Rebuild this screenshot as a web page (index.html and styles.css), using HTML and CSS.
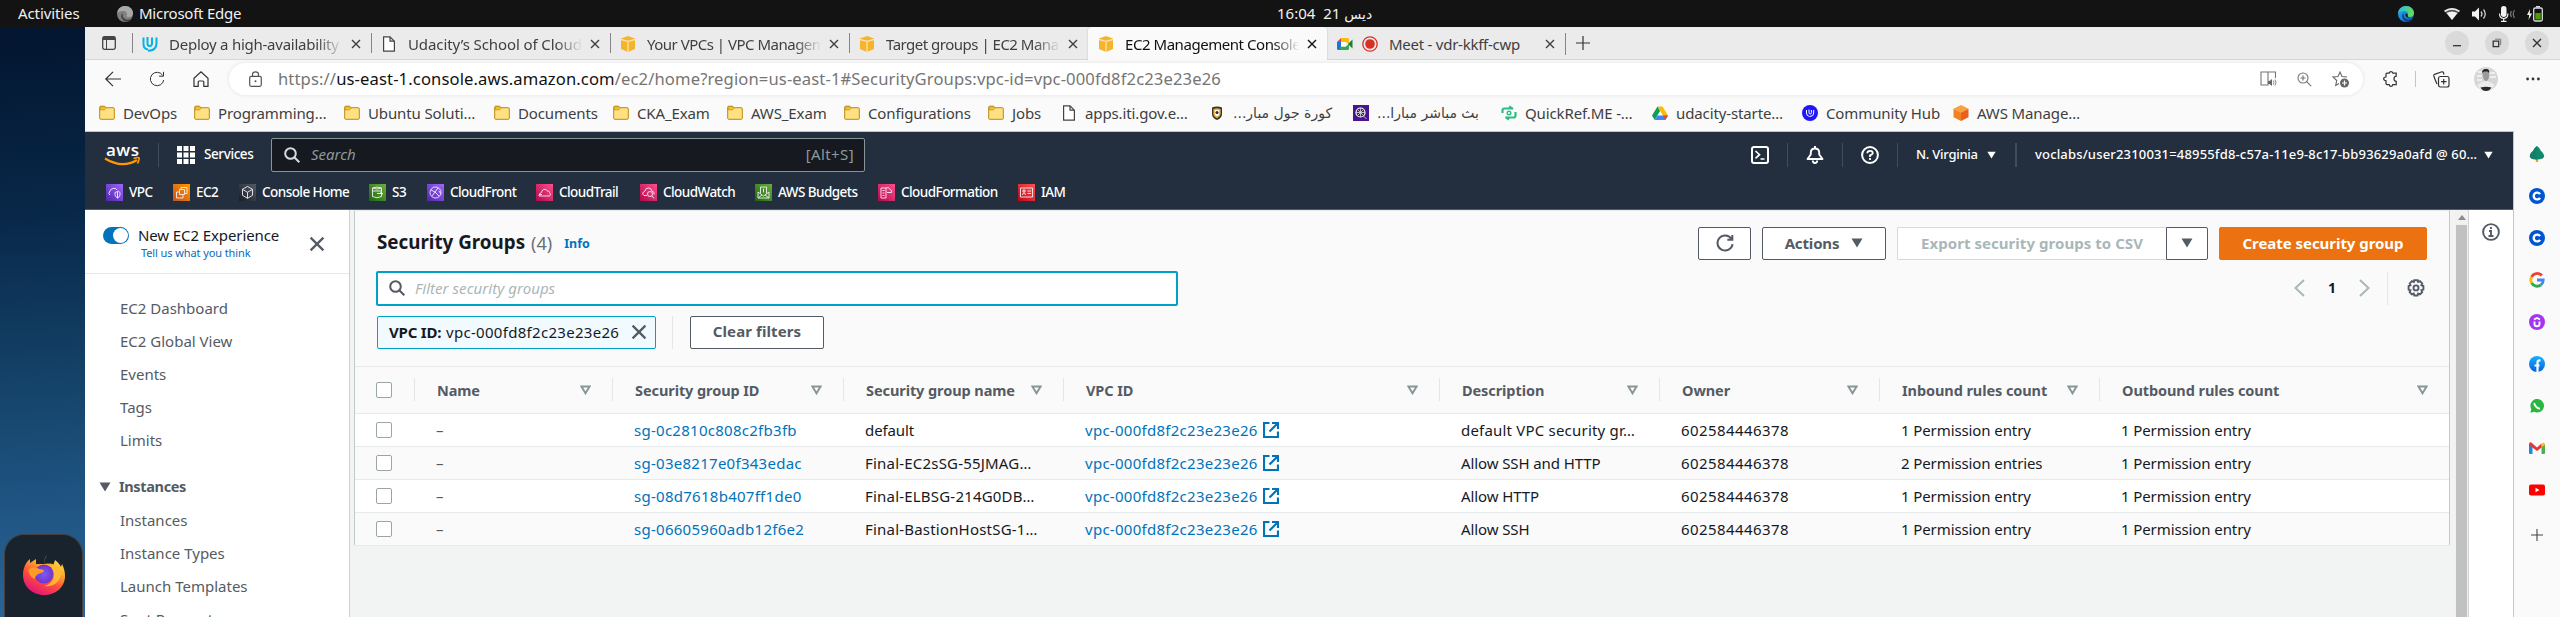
FILE: index.html
```html
<!DOCTYPE html>
<html lang="en">
<head>
<meta charset="utf-8">
<title>EC2 Management Console</title>
<link rel="stylesheet" href="styles.css">
</head>
<body>
<svg class="defs" aria-hidden="true">
  <defs>
    <linearGradient id="edge-a" x1="0" y1="0" x2="1" y2="1"><stop offset="0" stop-color="#2bb5ea"/><stop offset=".5" stop-color="#1b86d8"/><stop offset="1" stop-color="#0b4fa8"/></linearGradient>
    <linearGradient id="edge-b" x1="0" y1="0" x2="1" y2=".4"><stop offset="0" stop-color="#2ab8ee"/><stop offset="1" stop-color="#5fdc5a"/></linearGradient>
    <linearGradient id="ff" x1=".8" y1="0" x2=".3" y2="1"><stop offset="0" stop-color="#fff44f"/><stop offset=".35" stop-color="#ffb02e"/><stop offset=".65" stop-color="#ff4c3c"/><stop offset="1" stop-color="#e0127c"/></linearGradient>
    <radialGradient id="ffc"><stop offset="0" stop-color="#7a5cf5"/><stop offset="1" stop-color="#7532c8"/></radialGradient>
    <linearGradient id="fb" x1="0" y1="0" x2="0" y2="1"><stop offset="0" stop-color="#19afff"/><stop offset="1" stop-color="#0562df"/></linearGradient>
  </defs>
  <symbol id="folder" viewBox="0 0 16 16"><path d="M.7 2.2q0-1 1-1h4l1.4 1.5h7.2q1 0 1 1v9.600q0 1-1 1H1.700q-1 0-1-1z" fill="#ffe082" stroke="#b98a12" stroke-width="1"/><path d="M1.200 4.800V2.200q0-.5.5-.5h3.800L7 3.200 5.500 4.800z" fill="#f9c22e" stroke="#b98a12" stroke-width=".7"/></symbol>
  <symbol id="page" viewBox="0 0 16 16"><path d="M2.600.800h6.400l4.400 4.400v10H2.600zM9 .800v4.400h4.400" fill="#fff" stroke="#444" stroke-width="1.200"/></symbol>
  <symbol id="cube" viewBox="0 0 16 16"><path d="M8 0l7 2.500v10.500L8 16l-7-3V2.500z" fill="#f4b42c"/><path d="M1 3.500l7 1.800 7-1.800M8 5.300V16" stroke="#fce3ac" stroke-width="1.300" fill="none"/></symbol>
  <symbol id="close" viewBox="0 0 10 10"><path d="M1 1l8 8M9 1L1 9" stroke="currentColor" stroke-width="1.400" fill="none"/></symbol>
  <symbol id="plus" viewBox="0 0 14 14"><path d="M7 0v14M0 7h14" stroke="currentColor" stroke-width="1.200"/></symbol>
  <symbol id="search" viewBox="0 0 16 16"><circle cx="6.500" cy="6.500" r="5.300" fill="none" stroke="currentColor" stroke-width="2"/><path d="M10.300 10.300l5 5" stroke="currentColor" stroke-width="2"/></symbol>
  <symbol id="caret" viewBox="0 0 12 10"><path d="M.5.500h11L6 9.500z" fill="currentColor"/></symbol>
  <symbol id="sort" viewBox="0 0 12 10"><path d="M1.500 1.200h9L6 8.600z" fill="none" stroke="currentColor" stroke-width="2.100"/></symbol>
  <symbol id="ext" viewBox="0 0 16 16"><path d="M6.500 1H1v14h14V9.500M9 1h6v6M15 1L6.500 9.500" fill="none" stroke="currentColor" stroke-width="2.200"/></symbol>
  <symbol id="reload" viewBox="0 0 16 16"><path d="M14.700 9A6.700 6.700 0 1 1 13.600 4.200M14.500.800v4.400h-4.400" fill="none" stroke="currentColor"/></symbol>
  <symbol id="edge" viewBox="0 0 16 16"><circle cx="8" cy="8" r="8" fill="url(#edge-a)"/><path d="M.1 7C1 2.500 4.200 0 8 0c4.800 0 8 3.500 8 7 0 2.400-1.800 4-4 4-2 0-3-1-2.300-1.800C10.600 7.500 9.500 5 6.500 5 4 5 1.500 5.500.1 7z" fill="url(#edge-b)"/><path d="M6 7.500c-1.500 3.500 2 7 6.500 5.800 1.200-.3 2 .1 1.200.8C12 16 7.500 16.500 5 13 3.500 10.500 4 8 6 7.500z" fill="#0c3f8f"/><path d="M9.700 9.200c-.7.800.3 1.800 2.300 1.800-2 1.200-5 .2-4.500-3 1-.8 2.500 0 2.200 1.200z" fill="#131313"/></symbol>
  <symbol id="coursera" viewBox="0 0 16 16"><circle cx="8" cy="8" r="8" fill="#0056d2"/><path d="M11 9.800A3.400 3.400 0 1 1 11 6.200" fill="none" stroke="#fff" stroke-width="2.400"/></symbol>
</svg>

<header class="topbar">
  <span class="activities">Activities</span>
  <svg class="app-icon" viewBox="0 0 16 16"><circle cx="8" cy="8" r="8" fill="#808080"/><path d="M.1 7C1 2.500 4.200 0 8 0c4.800 0 8 3.500 8 7 0 2.400-1.800 4-4 4-2 0-3-1-2.300-1.800C10.600 7.500 9.500 5 6.500 5 4 5 1.500 5.500.1 7z" fill="#a8a8a8"/><path d="M6 7.500c-1.500 3.500 2 7 6.500 5.800 1.200-.3 2 .1 1.200.8C12 16 7.500 16.500 5 13 3.500 10.500 4 8 6 7.500z" fill="#444"/></svg>
  <span class="app-name">Microsoft Edge</span>
  <span class="clock">16:04&nbsp; 21 <bdi class="ar">ديس</bdi></span>
  <div class="tray">
    <svg width="16" height="16"><use href="#edge"/></svg>
    <svg width="16" height="12" viewBox="0 0 16 12"><path d="M0 2.700Q8-2.500 16 2.700L8 12z" fill="#555"/><path d="M0 2.700Q8-2.500 16 2.700L14.800 4Q8-.3 1.200 4z" fill="#eee"/><path d="M2.500 5Q8 1.800 13.500 5L8 12z" fill="#f2f2f2"/></svg>
    <svg width="15" height="14" viewBox="0 0 15 14"><path d="M0 4.500h3L7 .500v13L3 9.500H0z" fill="#f2f2f2"/><path d="M9 4.500q2 2.500 0 5M11.500 2.500q3.500 4.500 0 9" stroke="#ccc" stroke-width="1.300" fill="none"/></svg>
    <svg width="16" height="16" viewBox="0 0 16 16"><rect x="2" y="0" width="5.500" height="11" rx="2.700" fill="#f2f2f2"/><path d="M.5 7.500q0 5 4.200 5t4.200-5M4.700 12v3.500M2 15.300h5.500" stroke="#eee" stroke-width="1.200" fill="none"/><path d="M12.500 5q-2 3 0 6M15.500 4q-2.500 4 0 8" stroke="#777" stroke-width="1.200" fill="none"/></svg>
    <svg width="16" height="16" viewBox="0 0 16 16"><path d="M3 3L0 9h2.200L1.500 14 5 7.500H2.800z" fill="#f2f2f2"/><rect x="6.700" y="2" width="8.600" height="13" rx="1.500" fill="none" stroke="#ddd" stroke-width="1.300"/><path d="M9 .7h4" stroke="#ddd" stroke-width="1.400"/><path d="M8.300 7h5.500v6.500H8.300z" fill="#4e9a06"/></svg>
  </div>
</header>

<div class="desktop">
  <aside class="dock">
    <div class="dock-panel">
      <svg class="firefox" viewBox="0 0 42 44"><path d="M27 1C22 5 21 9 21 13c5-1 9 2 9 2L32 9c3 2 5 5 6 7l1-3c2 4 3 8 3 12 0 11-9 19-21 19S0 35 0 24c0-7 3-13 7-16v4l6-4v5c4 0 8 0 8 0 0-4 2-9 6-12z" fill="url(#ff)"/><circle cx="21" cy="23" r="9.500" fill="url(#ffc)"/><path d="M5 19c3-3 8-3 11-1 3 0 5 1 5 2-1 2-5 2-7 4-3 3-2 4-2 4-4-1-6-5-7-9z" fill="#ff9a26"/><path d="M23 13c5-1 9 5 8 12 0 5-5 9-10 10 9 2 17-5 17-13-1-7-8-11-15-9z" fill="#ffbd35" opacity=".9"/></svg>
    </div>
  </aside>

  <main class="window">
    <div class="tabstrip">
      <svg class="workspaces" viewBox="0 0 14 14"><rect x=".7" y=".7" width="12.600" height="12.600" rx="1.800" fill="none" stroke="#444" stroke-width="1.300"/><path d="M1 .700h12v3.300H1z" fill="#444"/><path d="M4.500 4v9" stroke="#444"/></svg>
      <div class="tab"><svg class="fav" viewBox="0 0 16 16"><path d="M1.500 1.500v6.500q0 5 4.500 5.500M5.500 1v6.500q0 2.500 2.200 2.500T10 7.500V1.500M14.500 1.500v6q0 7-8.500 7.300" fill="none" stroke="#02b3e4" stroke-width="2"/></svg><span class="tab-title">Deploy a high-availability</span><svg class="tab-x"><use href="#close"/></svg></div>
      <div class="tab"><svg class="fav"><use href="#page"/></svg><span class="tab-title">Udacity’s School of Cloud</span><svg class="tab-x"><use href="#close"/></svg></div>
      <div class="tab"><svg class="fav"><use href="#cube"/></svg><span class="tab-title">Your VPCs | VPC Managem</span><svg class="tab-x"><use href="#close"/></svg></div>
      <div class="tab"><svg class="fav"><use href="#cube"/></svg><span class="tab-title">Target groups | EC2 Mana</span><svg class="tab-x"><use href="#close"/></svg></div>
      <div class="tab active"><svg class="fav"><use href="#cube"/></svg><span class="tab-title">EC2 Management Console</span><svg class="tab-x"><use href="#close"/></svg></div>
      <div class="tab meet"><svg class="fav" viewBox="0 0 16 16"><path d="M0 6l4-4v4z" fill="#ea4335"/><path d="M0 6h4v8H1.500Q0 14 0 12.500z" fill="#1a73e8"/><path d="M4 2h6.500Q12 2 12 3.500V8l-3-2H4z" fill="#fbbc04"/><path d="M3 10.500h6L12 8v4.500q0 1.500-1.500 1.500H3z" fill="#34a853"/><path d="M4 6h5v4.500H4z" fill="#fff"/><path d="M11 8l4.500-4.500v9z" fill="#188038"/></svg><svg class="rec" viewBox="0 0 16 16"><circle cx="8" cy="8" r="7.200" fill="none" stroke="#d93025" stroke-width="1.300"/><circle cx="8" cy="8" r="4.800" fill="#d93025"/></svg><span class="tab-title">Meet - vdr-kkff-cwp</span><svg class="tab-x"><use href="#close"/></svg></div>
      <svg class="newtab"><use href="#plus"/></svg>
      <div class="winctl">
        <i><svg viewBox="0 0 12 12"><path d="M2 8.700h8" stroke="#333" stroke-width="1.300"/></svg></i>
        <i><svg viewBox="0 0 12 12"><path d="M2.200 4.200h5.500v5.500H2.200z" fill="none" stroke="#333" stroke-width="1.300"/><path d="M4 2.200h5.700V8" fill="none" stroke="#777"/></svg></i>
        <i><svg viewBox="0 0 12 12"><path d="M2 2l8 8M10 2l-8 8" stroke="#333" stroke-width="1.400"/></svg></i>
      </div>
    </div>

    <div class="toolbar">
      <svg class="nav-ic" viewBox="0 0 16 16"><path d="M16 8H.8M8 .8L.8 8 8 15.200" fill="none" stroke="#333" stroke-width="1.200"/></svg>
      <svg class="nav-ic"><use href="#reload"/></svg>
      <svg class="nav-ic" viewBox="0 0 16 16"><path d="M1 7.200l7-6.400 7 6.400v8.200h-4.200V11q0-1-1-1H6.200q-1 0-1 1v4.400H1z" fill="none" stroke="#333" stroke-width="1.200"/></svg>
      <div class="omnibox">
        <svg class="lock" viewBox="0 0 13 16"><rect x=".7" y="5.300" width="11.600" height="10" rx="1.500" fill="none" stroke="#555" stroke-width="1.200"/><path d="M3.500 5.300V3.500q0-2.700 3-2.700t3 2.700v1.800" fill="none" stroke="#555" stroke-width="1.200"/><circle cx="6.500" cy="10.300" r="1" fill="#555"/></svg>
        <span class="url">https://<b>us-east-1.console.aws.amazon.com</b>/ec2/home?region=us-east-1#SecurityGroups:vpc-id=vpc-000fd8f2c23e23e26</span>
        <svg class="ob1" width="17" height="16" viewBox="0 0 17 16"><path d="M8 14H1V1h7zM8 1h7.500v6" fill="none" stroke="#777" stroke-width="1.100"/><path d="M8 10h1.500L12 8v7l-2.500-2H8z" fill="#666"/><path d="M13.300 9.500q1.200 2 0 4M15 8.500q2 3 0 6" fill="none" stroke="#888"/></svg>
        <svg class="ob2" width="15" height="15" viewBox="0 0 15 15"><circle cx="6" cy="6" r="5" fill="none" stroke="#777" stroke-width="1.100"/><path d="M9.700 9.700l4.500 4.500M6 3.500v5M3.500 6h5" stroke="#777" stroke-width="1.200"/></svg>
        <svg class="ob3" width="18" height="17" viewBox="0 0 18 17"><path d="M15 6L10 5.500 8 1 6 5.500l-5 .5 3.700 3.500-1 5L7 12.500" fill="none" stroke="#666" stroke-width="1.100"/><circle cx="12.500" cy="12" r="4.500" fill="#666"/><path d="M12.500 9.500v5M10 12h5" stroke="#fff" stroke-width="1.200"/></svg>
      </div>
      <svg class="puzzle" viewBox="0 0 16 16"><path d="M4 2.200h2.200q.3-1.600 1.800-1.600t1.800 1.600h3.400v3q-2.200.2-2.200 2.600t2.200 2.600v3.200H9.800q-.3 1.700-1.800 1.700t-1.800-1.700H4q-1 0-1-1V9.800q-2.300-.2-2.300-2T3 6V3.200q0-1 1-1z" fill="none" stroke="#333" stroke-width="1.200"/></svg>
      <span class="tsep"></span>
      <svg class="collect" viewBox="0 0 17 17"><rect x="5.500" y="5.500" width="10.500" height="10.500" rx="2" fill="none" stroke="#333" stroke-width="1.200"/><path d="M10.700 8v5.500M8 10.700h5.500" stroke="#333" stroke-width="1.200"/><path d="M4 13Q2.500 10 .8 5q-.3-1.200.8-1.600L8.800.8q1.300-.3 1.700 1L11 3.500" fill="none" stroke="#333" stroke-width="1.200"/></svg>
      <svg class="avatar" viewBox="0 0 24 24"><circle cx="12" cy="12" r="12" fill="#d6d6d6"/><path d="M4 5h4M3 9h5M3 13h5M16 6h5M16 10h6" stroke="#efefef" stroke-width="2"/><path d="M8.500 6q0-4 3.500-4t3 4v4q-1 4-3 4t-3-4z" fill="#9b9b9b"/><path d="M8 6Q8 2 12 2t3 4L14 4.500h-4z" fill="#222"/><path d="M3.500 18q4-4 8-4t9 4q-3 6-9 6t-8-6z" fill="#ececec"/><path d="M6.500 20.500q5.500-1.500 11 0-2 3.500-5.500 3.500t-5.500-3.500z" fill="#2b2b2b"/></svg>
      <svg class="dots" viewBox="0 0 14 4"><circle cx="1.600" cy="2" r="1.400"/><circle cx="7" cy="2" r="1.400"/><circle cx="12.400" cy="2" r="1.400"/></svg>
    </div>

    <nav class="bookmarks">
      <a><svg><use href="#folder"/></svg>DevOps</a>
      <a><svg><use href="#folder"/></svg>Programming…</a>
      <a><svg><use href="#folder"/></svg>Ubuntu Soluti…</a>
      <a><svg><use href="#folder"/></svg>Documents</a>
      <a><svg><use href="#folder"/></svg>CKA_Exam</a>
      <a><svg><use href="#folder"/></svg>AWS_Exam</a>
      <a><svg><use href="#folder"/></svg>Configurations</a>
      <a><svg><use href="#folder"/></svg>Jobs</a>
      <a><svg><use href="#page"/></svg>apps.iti.gov.e…</a>
      <a><svg viewBox="0 0 16 16"><path d="M3 2.500Q8 .500 13 2.500V9q0 4-5 6-5-2-5-6z" fill="#333"/><path d="M5 4.500q3-1 6 0V9q0 2-3 3.500Q5 11 5 9z" fill="#fff" stroke="#e5a823" stroke-width="1.400"/><circle cx="8" cy="7.500" r="1.600" fill="#333"/></svg><bdi class="ar">كورة جول مبار...</bdi></a>
      <a><svg viewBox="0 0 16 16"><rect width="16" height="16" fill="#4a148c"/><circle cx="7.500" cy="7.500" r="4.500" fill="none" stroke="#fff" stroke-width="1.200"/><path d="M7.500 3v9M3 7.500h9M4.500 4.500l6 6M10.500 4.500l-6 6M10.500 11l3 3" stroke="#ddd" stroke-width=".8"/></svg><bdi class="ar">بث مباشر مبارا...</bdi></a>
      <a><svg viewBox="0 0 16 16"><path d="M1.500 8V5.500q0-2 2-2H11M8 1.500l4 2.500M14.500 7v3.500q0 2-2 2H5M8 14.500L4.500 12" fill="none" stroke="#2ebd85" stroke-width="2.200"/><circle cx="8" cy="8" r="1.800" fill="none" stroke="#2ebd85" stroke-width="1.400"/></svg>QuickRef.ME -…</a>
      <a><svg viewBox="0 0 16 16"><path d="M5.500 1.500h5L16 10.500h-5z" fill="#fbbc04"/><path d="M5.500 1.500L8 6 2.700 15 0 10.500z" fill="#0f9d58"/><path d="M5.300 10.500H16L13.300 15H2.700z" fill="#4285f4"/><path d="M16 10.500h-5l2.300 4.500z" fill="#ea4335"/></svg>udacity-starte…</a>
      <a><svg viewBox="0 0 16 16"><circle cx="8" cy="8" r="8" fill="#2015ff"/><path d="M4.500 5v3q0 3 3 3.500M7 4.500v3.200q0 1.300 1.200 1.300t1.200-1.300V5M11.700 5v3q0 3.500-4 3.500" fill="none" stroke="#fff"/></svg>Community Hub</a>
      <a><svg viewBox="0 0 16 16"><path d="M8 0l7.500 3.700L8 7.500.500 3.700z" fill="#f9a03f"/><path d="M.5 3.700L8 7.500V16L.5 12.200z" fill="#f58220"/><path d="M15.500 3.700L8 7.500V16l7.500-3.800z" fill="#e8611c"/></svg>AWS Manage…</a>
    </nav>

    <div class="content">
      <section class="console">
        <header class="aws-head">
          <div class="aws-top">
            <svg class="aws-logo" viewBox="0 0 36 22"><text x="1" y="12" textLength="33" class="aws-word">aws</text><path d="M0 14.500q17 10.500 32 1.500" fill="none" stroke="#f90" stroke-width="2.200"/><path d="M28.500 14.500q5-1.500 5.500-.5t-1.500 5.500" fill="none" stroke="#f90" stroke-width="1.800"/></svg>
            <span class="hsep h1"></span>
            <svg class="grid-ic" viewBox="0 0 18 18"><path d="M0 0h5v5H0zM6.500 0h5v5h-5zM13 0h5v5h-5zM0 6.500h5v5H0zM6.500 6.500h5v5h-5zM13 6.500h5v5h-5zM0 13h5v5H0zM6.500 13h5v5h-5zM13 13h5v5h-5z" fill="#fff"/></svg>
            <span class="services">Services</span>
            <div class="aws-search"><svg><use href="#search"/></svg><em>Search</em><span>[Alt+S]</span></div>
            <div class="aws-right">
              <svg viewBox="0 0 18 18"><rect x="1" y="1" width="16" height="16" rx="2" fill="none" stroke="#fff" stroke-width="2"/><path d="M4.500 5l4 3.700-4 3.700M9.500 13h4" fill="none" stroke="#fff" stroke-width="1.700"/></svg>
              <span class="hsep"></span>
              <svg viewBox="0 0 18 18"><path d="M9 0v2M1.500 13h15L13.200 8.500V6.500Q13 2.500 9 2.500T4.800 6.500v2zM6.800 14.500q0 2.500 2.200 2.500t2.200-2.500" fill="none" stroke="#fff" stroke-width="1.900" stroke-linejoin="round"/></svg>
              <span class="hsep"></span>
              <svg viewBox="0 0 18 18"><circle cx="9" cy="9" r="7.900" fill="none" stroke="#fff" stroke-width="2"/><path d="M6.300 7.300q0-2.500 2.700-2.500t2.700 2.300Q11.700 8.500 9 9.300V11M9 12v2" fill="none" stroke="#fff" stroke-width="1.800"/></svg>
              <span class="hsep"></span>
              <span class="region">N. Virginia</span><svg class="c9"><use href="#caret"/></svg>
              <span class="hsep h2"></span>
              <span class="account">voclabs/user2310031=48955fd8-c57a-11e9-8c17-bb93629a0afd @ 60…</span><svg class="c9"><use href="#caret"/></svg>
            </div>
          </div>
          <nav class="aws-favs">
            <a><svg class="purple" viewBox="0 0 17 17"><path d="M4 11q-2-1-.5-3 .5-3 3.500-3.500Q10 3.500 11 6M9 8.500l3.500-1.300L14 8.500v2q0 2.500-2.500 3.500Q9 12.500 9 10.500zM11.500 8v6"/></svg><span>VPC</span></a>
            <a><svg class="orange" viewBox="0 0 17 17"><path d="M6.500 5.500h5v5h-5zM8 3.500h6v6M3.500 8v6H10v-3.500M3.500 8h3M14 9.500h-2.500M8 3.500v2"/></svg><span>EC2</span></a>
            <a><svg class="gray" viewBox="0 0 17 17"><path d="M8.500 2.500l5 2.800v6l-5 3-5-3v-6zM3.500 5.300l5 3 5-3M8.500 8.300v6"/></svg><span>Console Home</span></a>
            <a><svg class="green" viewBox="0 0 17 17"><path d="M3.500 4v8.500q4.500 2.500 9 0V4M3.500 4q4.500-1.800 9 0-4.500 2-9 0zM3.500 7h9M8 9.500h6M11 8.500l3 1.500"/></svg><span>S3</span></a>
            <a><svg class="purple" viewBox="0 0 17 17"><circle cx="8.500" cy="8.500" r="5.500"/><path d="M4 6l4 2 3-4M8 8l-3 4M8 8l4 4M12 7l2 3"/></svg><span>CloudFront</span></a>
            <a><svg class="pink" viewBox="0 0 17 17"><path d="M3 12h10.500q2-1.500 0-3.500-.5-2-2-1.500Q10 4.500 7.500 5.500 5.500 6.500 5.500 8.500 3 9 3 12zM3 10.500h3"/></svg><span>CloudTrail</span></a>
            <a><svg class="pink" viewBox="0 0 17 17"><path d="M7 11.500H4q-3-2.500 1-4.500.5-3.500 4-3 2.500.5 3 3Q15 8 14 10.500"/><circle cx="10" cy="10" r="2.500"/><path d="M12 12l2 2.500"/></svg><span>CloudWatch</span></a>
            <a><svg class="green" viewBox="0 0 17 17"><path d="M3 8v6h11V8l-5.500 4zM5.500 9.500V3h6v6.500M8.500 4.500v4M3 14l4-3M14 14l-4-3"/></svg><span>AWS Budgets</span></a>
            <a><svg class="pink" viewBox="0 0 17 17"><path d="M3 4h5v10H3zM4.500 6.500h2M4.500 9h2M4.500 11.500h2M8 4q3-1.500 4 1.500 2.500.5 1.500 3H9"/></svg><span>CloudFormation</span></a>
            <a><svg class="red" viewBox="0 0 17 17"><path d="M2.500 4h12v9h-12zM4.500 11q0-2 1.500-2t1.500 2M5 6h2v2H5zM9.500 7H13M9.500 9.500H13"/></svg><span>IAM</span></a>
          </nav>
        </header>

        <div class="aws-body">
          <aside class="sidenav">
            <div class="exp">
              <span class="toggle"><i></i></span>
              <div class="exp-text"><span>New EC2 Experience</span><a>Tell us what you think</a></div>
              <svg class="exp-x"><use href="#close"/></svg>
            </div>
            <ul>
              <li>EC2 Dashboard</li><li>EC2 Global View</li><li>Events</li><li>Tags</li><li>Limits</li>
              <li class="group"><svg><use href="#caret"/></svg>Instances</li>
              <li>Instances</li><li>Instance Types</li><li>Launch Templates</li><li>Spot Requests</li>
            </ul>
          </aside>

          <div class="stage">
            <div class="panel">
              <div class="title-row">
                <h1>Security Groups</h1><span class="count">(4)</span><a class="info">Info</a>
                <div class="actions">
                  <button class="btn refresh"><svg><use href="#reload"/></svg></button>
                  <button class="btn act">Actions<svg><use href="#caret"/></svg></button>
                  <div class="split"><button class="btn export">Export security groups to CSV</button><button class="btn more"><svg><use href="#caret"/></svg></button></div>
                  <button class="btn primary">Create security group</button>
                </div>
              </div>
              <div class="filter-row">
                <div class="filter"><svg><use href="#search"/></svg><em>Filter security groups</em></div>
                <div class="pager">
                  <svg class="chev" viewBox="0 0 11 18"><path d="M10 1L1.500 9l8.500 8" /></svg>
                  <b>1</b>
                  <svg class="chev" viewBox="0 0 11 18"><path d="M1 1l8.500 8L1 17"/></svg>
                  <span class="vsep"></span>
                  <svg class="gear" viewBox="0 0 18 18"><path d="M7.300 1.200h3.400l.5 1.800 1.800-.9 2.200 2.300-.8 1.800 2 .8v3.600l-2 .6.8 2-2.300 2.200-1.800-.8-.6 1.900H7.300l-.6-1.900-1.900.8-2.200-2.300.9-1.800-1.900-.7V7l1.900-.7-.8-1.900 2.200-2.300 1.900.9z"/><circle cx="9" cy="8.900" r="2.500"/></svg>
                </div>
              </div>
              <div class="token-row">
                <div class="token"><b>VPC ID:</b><span>vpc-000fd8f2c23e23e26</span><svg><use href="#close"/></svg></div>
                <span class="vsep"></span>
                <button class="btn clear">Clear filters</button>
              </div>

              <div class="row head">
                <div><i class="cb"></i></div>
                <div>Name<svg><use href="#sort"/></svg></div>
                <div>Security group ID<svg><use href="#sort"/></svg></div>
                <div>Security group name<svg><use href="#sort"/></svg></div>
                <div>VPC ID<svg><use href="#sort"/></svg></div>
                <div>Description<svg><use href="#sort"/></svg></div>
                <div>Owner<svg><use href="#sort"/></svg></div>
                <div>Inbound rules count<svg><use href="#sort"/></svg></div>
                <div>Outbound rules count<svg><use href="#sort"/></svg></div>
              </div>
              <div class="row"><div><i class="cb"></i></div><div class="dash">–</div><div class="id">sg-0c2810c808c2fb3fb</div><div>default</div><div class="id">vpc-000fd8f2c23e23e26<svg><use href="#ext"/></svg></div><div class="trunc">default VPC security gr…</div><div class="num">602584446378</div><div>1 Permission entry</div><div>1 Permission entry</div></div>
              <div class="row"><div><i class="cb"></i></div><div class="dash">–</div><div class="id">sg-03e8217e0f343edac</div><div class="trunc">Final-EC2sSG-55JMAG…</div><div class="id">vpc-000fd8f2c23e23e26<svg><use href="#ext"/></svg></div><div>Allow SSH and HTTP</div><div class="num">602584446378</div><div>2 Permission entries</div><div>1 Permission entry</div></div>
              <div class="row"><div><i class="cb"></i></div><div class="dash">–</div><div class="id">sg-08d7618b407ff1de0</div><div class="trunc">Final-ELBSG-214G0DB…</div><div class="id">vpc-000fd8f2c23e23e26<svg><use href="#ext"/></svg></div><div>Allow HTTP</div><div class="num">602584446378</div><div>1 Permission entry</div><div>1 Permission entry</div></div>
              <div class="row"><div><i class="cb"></i></div><div class="dash">–</div><div class="id">sg-06605960adb12f6e2</div><div class="trunc">Final-BastionHostSG-1…</div><div class="id">vpc-000fd8f2c23e23e26<svg><use href="#ext"/></svg></div><div>Allow SSH</div><div class="num">602584446378</div><div>1 Permission entry</div><div>1 Permission entry</div></div>
            </div>
            <div class="scrollbar"><svg viewBox="0 0 8 5"><path d="M0 5h8L4 0z" fill="#8b8b8b"/></svg><i></i></div>
          </div>

          <aside class="help">
            <svg viewBox="0 0 18 18"><circle cx="9" cy="9" r="7.900" fill="none" stroke="#545b64" stroke-width="1.900"/><path d="M9 4v2M7 8h2v5M6.500 13h5" fill="none" stroke="#545b64" stroke-width="1.900"/></svg>
          </aside>
        </div>
      </section>

      <aside class="edgebar">
        <svg viewBox="0 0 16 16"><path d="M6.800 11h2.400v5H6.800z" fill="#f0a020"/><path d="M8 0q3 2 4 5 4 3 3 6-1 2.500-7 2.500T1 11Q0 8 4 5q1-3 4-5z" fill="#0e8a6c"/><path d="M8 0Q6.500 7 8 13.500 2 13.500 1 11 0 8 4 5q1-3 4-5z" fill="#15806a"/></svg>
        <svg><use href="#coursera"/></svg>
        <svg><use href="#coursera"/></svg>
        <svg viewBox="0 0 16 16"><path d="M12.800 3.500A6.200 6.200 0 0 0 2.600 5" fill="none" stroke="#ea4335" stroke-width="2.800"/><path d="M2.600 5a6.200 6.200 0 0 0 0 6" fill="none" stroke="#fbbc04" stroke-width="2.800"/><path d="M2.600 11a6.200 6.200 0 0 0 9.400 1.800" fill="none" stroke="#34a853" stroke-width="2.800"/><path d="M12 12.800A6 6 0 0 0 14.200 8H8" fill="none" stroke="#4285f4" stroke-width="2.800"/></svg>
        <svg viewBox="0 0 16 16"><circle cx="8" cy="8" r="8" fill="#a435f0"/><path d="M5 5.500L8 4l3 1.500M5.500 7.500V10q0 2.300 2.500 2.300t2.500-2.300V7.500" fill="none" stroke="#fff" stroke-width="1.900"/></svg>
        <svg viewBox="0 0 16 16"><circle cx="8" cy="8" r="8" fill="url(#fb)"/><path d="M8.500 16v-6M5.500 9.500h5M8.500 12V6.500q0-2.500 3-2" fill="none" stroke="#fff" stroke-width="2.200"/></svg>
        <svg viewBox="0 0 16 16"><path d="M1.300 14.700l1-3.500A6.800 6.800 0 1 1 5 13.800z" fill="#29b640"/><path d="M5.500 5q-.5 1.500 1.500 3.700T11 10.500" fill="none" stroke="#fff" stroke-width="2"/></svg>
        <svg viewBox="0 0 16 16"><path d="M0 4v9q0 1 1 1h2.500V6.500z" fill="#1e88e5"/><path d="M16 4v9q0 1-1 1h-2.500V6.500z" fill="#4caf50"/><path d="M12.500 4L14 2.500q2 0 2 2l-3.500 3z" fill="#fbc02d"/><path d="M0 4.500Q0 2 2 2.300L8 7.500l4.500-4v4L8 11 0 5z" fill="#e53935"/></svg>
        <svg viewBox="0 0 16 16"><rect y="2.500" width="16" height="11" rx="2" fill="#f00"/><path d="M6.500 5.700v4.600l4-2.300z" fill="#fff"/></svg>
        <svg class="add" viewBox="0 0 14 14"><path d="M7 1v12M1 7h12" stroke="#444" stroke-width="1.100"/></svg>
      </aside>
    </div>
  </main>
</div>
</body>
</html>
```
FILE: styles.css
```css
* { box-sizing: border-box; }
body { margin: 0; width: 2560px; height: 617px; overflow: hidden; font: 15px/1 "Noto Sans", "DejaVu Sans", sans-serif; color: #16191f; background: #fff; display: flex; flex-direction: column; white-space: nowrap; }
svg { display: block; flex: none; width: 16px; height: 16px; overflow: visible; }
.defs { position: absolute; width: 0; height: 0; }
button { font: inherit; margin: 0; padding: 0; }
i { font-style: normal; }
.ar { font-family: "DejaVu Sans", sans-serif; font-size: 14px; letter-spacing: 0; }

/* GNOME top bar */
.topbar { height: 27px; flex: none; background: #131313; color: #f0f0f0; display: grid; grid-template-columns: 99px 22px 1138px 1121px auto; padding-left: 18px; align-items: center; letter-spacing: -.1px; }
.app-name { letter-spacing: -.25px; }
.tray { display: grid; grid-template-columns: 46px 28px 27px 28px 16px; align-items: center; }
.tray svg:nth-child(2) { height: 12px; }
.tray svg:nth-child(3) { width: 15px; height: 14px; }

.desktop { flex: 1; display: flex; min-height: 0; }
.dock { width: 85px; flex: none; padding: 507px 2px 0 4px; background: linear-gradient(176deg, #03152f 0%, #082849 32%, #174870 66%, #2b659b 100%); }
.dock-panel { height: 100px; border: 1px solid #47413f; border-bottom: 0; border-radius: 20px 20px 0 0; background: #18232d; padding: 16px 0 0 18px; }
.firefox { width: 42px; height: 44px; }
.window { flex: 1; display: flex; flex-direction: column; min-width: 0; background: #fafafa; }

/* Browser tabs */
.tabstrip { height: 33px; flex: none; background: #ebebeb; border-bottom: 1px solid #d6d6d6; display: flex; align-items: stretch; padding-left: 17px; }
.tabstrip > .workspaces { width: 14px; height: 14px; margin: 9px 16px 0 0; }
.tab { width: 239px; height: 33px; display: flex; align-items: center; padding: 0 10px; color: #3f3f3f; background: linear-gradient(#858585, #858585) 0 6px / 1px 20px no-repeat; letter-spacing: -.25px; }
.tab:nth-child(n+3) { letter-spacing: -.4px; }
.tab:nth-child(3) { letter-spacing: -.1px; }
.tab:nth-child(n+4) { letter-spacing: -.5px; }
.tab.active { background: #fafafa; border-radius: 4px 4px 0 0; color: #111; box-shadow: 0 0 2px #bbb; clip-path: inset(0 -2px 0 -2px); letter-spacing: -.45px; }
.tab.meet { background: none; border-right: 1px solid #858585; border-image: linear-gradient(transparent 20%, #858585 20%, #858585 82%, transparent 82%) 1; letter-spacing: -.25px; }
.tab-title { width: 177px; margin-left: 11px; line-height: 24px; overflow: hidden; -webkit-mask-image: linear-gradient(90deg, #000 84%, transparent 99%); mask-image: linear-gradient(90deg, #000 84%, transparent 99%); }
.meet .rec { margin-left: 9px; }
.meet .tab-title { width: 148px; margin-left: 11px; -webkit-mask-image: none; mask-image: none; }
.tab-x { width: 10px; height: 10px; margin-left: 6px; }
.meet .tab-x { margin-left: 9px; }
.newtab { width: 14px; height: 14px; margin: 9px 0 0 10px; color: #333; }
.winctl { margin: 4px 11px 0 auto; display: flex; gap: 16px; }
.winctl i { width: 24px; height: 24px; border-radius: 50%; background: #dadada; display: grid; place-items: center; }
.winctl svg { width: 12px; height: 12px; }

/* Address bar */
.toolbar { height: 38px; flex: none; display: flex; align-items: center; padding-left: 20px; color: #333; }
.nav-ic { margin-right: 28px; }
.omnibox { width: 2134px; height: 32px; margin-left: -8px; border-radius: 16px; background: #fff; box-shadow: 0 0 4px #0000001a; display: flex; align-items: center; padding-left: 20px; }
.lock { width: 13px; }
.url { width: 1982px; margin-left: 16px; font-size: 16.600px; line-height: 24px; color: #757575; letter-spacing: .12px; }
.url b { font-weight: 400; color: #111; }
.ob1 { width: 17px; }
.ob2 { width: 15px; height: 15px; margin-left: 20px; }
.ob3 { width: 18px; height: 17px; margin-left: 20px; }
.puzzle { margin-left: 20px; }
.tsep { width: 1px; height: 16px; background: #c4c4c4; margin: 0 17px 0 16px; }
.collect { width: 17px; height: 17px; }
.avatar { width: 24px; height: 24px; margin-left: 24px; }
.dots { width: 14px; height: 4px; margin-left: 28px; fill: #333; }

.bookmarks { height: 33px; flex: none; display: grid; grid-template-columns: 95px 150px 150px 119px 114px 117px 144px 73px 148px 144px 148px 151px 150px 151px 140px; padding: 0 0 3px 14px; color: #3f3f3f; align-items: center; letter-spacing: -.12px; }
.bookmarks a { display: flex; align-items: center; gap: 8px; line-height: 24px; }

.content { flex: 1; display: flex; min-height: 0; }
.console { width: 2429px; border-right: 1px solid #c3c8c8; border-top: 1px solid #bcc8c8; display: flex; flex-direction: column; }
.edgebar { flex: 1; display: grid; grid-auto-rows: 42px; justify-items: center; align-items: center; padding-top: 2px; justify-content: center; }
.edgebar .add { width: 14px; height: 14px; margin-top: 6px; }

/* AWS header */
.aws-head { height: 78px; flex: none; background: #232f3e; color: #fff; border-bottom: 1px solid #545b64; }
.aws-top { height: 45px; display: flex; align-items: center; padding-left: 20px; }
.aws-logo { width: 36px; height: 22px; }
.aws-word { font: 600 17px "Open Sans", sans-serif; fill: #fff; }
.hsep { width: 1px; height: 24px; background: #414d5c; }
.h1 { margin: 0 18px 0 17px; }
.grid-ic { width: 18px; height: 18px; }
.services { width: 67px; margin-left: 9px; padding-bottom: 2px; font-size: 13.500px; font-weight: 500; letter-spacing: -.4px; line-height: 20px; }
.aws-search { width: 594px; height: 34px; background: #16191f; border: 1px solid #879596; border-radius: 2px; display: flex; align-items: center; padding: 0 10px 0 12px; color: #8d9a9b; line-height: 20px; }
.aws-search svg { color: #d5dbdb; }
.aws-search em { margin-left: 11px; padding-bottom: 2px; }
.aws-search span { margin-left: auto; padding-bottom: 2px; letter-spacing: .4px; }
.aws-right { display: flex; align-items: center; margin-left: 886px; font-size: 13px; font-weight: 500; line-height: 20px; }
.aws-right > svg { width: 18px; height: 18px; margin-right: 18px; }
.aws-right > .hsep { margin-right: 18px; }
.aws-right .region { width: 71px; padding-bottom: 1px; letter-spacing: -.25px; }
.aws-right > .c9 { width: 9px; height: 8px; margin-right: 19px; }
.aws-right > .h2 { width: 2px; }
.aws-right .account { width: 449px; padding-bottom: 1px; letter-spacing: .17px; }
.aws-favs { height: 32px; display: grid; grid-template-columns: 67px 66px 130px 58px 109px 104px 115px 123px 140px 60px; padding: 0 0 1px 21px; align-items: center; font-size: 13.500px; font-weight: 500; letter-spacing: -.55px; }
.aws-favs a { display: flex; align-items: center; gap: 6px; line-height: 18px; }
.aws-favs span { padding-bottom: 1px; }
.aws-favs svg { width: 17px; height: 17px; fill: none; stroke: #f5eef8; stroke-width: .9; }
.purple { background: linear-gradient(45deg, #4d27aa, #a166ff); }
.orange { background: linear-gradient(45deg, #c8511b, #f90); }
.gray { background: linear-gradient(45deg, #191d24, #545b64); }
.green { background: linear-gradient(45deg, #1b660f, #6cae3e); }
.pink { background: linear-gradient(45deg, #b0084d, #ff4f8b); }
.red { background: linear-gradient(45deg, #bd0816, #ff5252); }

.aws-body { flex: 1; display: flex; min-height: 0; }

/* Side navigation */
.sidenav { width: 265px; flex: none; background: #fff; border-right: 1px solid #c9d0d0; overflow: hidden; }
.exp { height: 64px; border-bottom: 1px solid #e4e8e8; display: flex; padding: 17px 0 0 18px; }
.toggle { width: 26px; height: 17px; border-radius: 9px; background: #0073bb; display: flex; justify-content: flex-end; padding: 1px; }
.toggle i { width: 15px; height: 15px; border-radius: 50%; background: #fff; }
.exp-text { width: 171px; margin-left: 9px; display: flex; flex-direction: column; }
.exp-text span { line-height: 16px; letter-spacing: -.1px; }
.exp-text a { font-size: 11px; line-height: 20px; color: #0a6bb8; margin-left: 3px; letter-spacing: -.1px; }
.exp-x { width: 16px; height: 16px; margin-top: 9px; color: #545b64; }
.sidenav ul { list-style: none; margin: 0; padding: 18px 0 0 35px; color: #545b64; letter-spacing: 0; }
.sidenav li { height: 33px; line-height: 33px; }
.sidenav .group { height: 34px; margin: 13px 0 0 -21px; padding-bottom: 1px; display: flex; align-items: center; gap: 8px; font-weight: 700; font-size: 14.500px; letter-spacing: -.35px; }
.group svg { width: 12px; height: 10px; }

/* Security groups panel */
.stage { width: 2119px; background: #f2f3f3; display: flex; padding: 0 0 0 4px; }
.panel { width: 2096px; height: 335px; background: #fafafa; border: 1px solid #c3caca; border-top-color: #e6eaea; border-bottom: 0; }
.title-row { height: 60px; display: flex; align-items: center; padding: 5px 22px 0 22px; }
h1 { font-size: 18.800px; font-weight: 700; margin: 0 0 2px; letter-spacing: 0; }
.count { font-size: 18px; color: #687078; margin: 0 0 2px 6px; }
.info { font-size: 12.500px; font-weight: 700; color: #0073bb; margin: 2px 0 0 12px; }
.actions { display: flex; gap: 11px; margin-left: auto; }
.btn { height: 33px; border: 1px solid #545b64; border-radius: 2px; background: #fff; color: #545b64; font-weight: 700; letter-spacing: .1px; display: flex; align-items: center; justify-content: center; padding-bottom: 1px; }
.refresh { width: 53px; }
.refresh svg { width: 18px; height: 18px; stroke-width: 1.800; }
.act { width: 124px; gap: 12px; letter-spacing: -.15px; }
.act svg, .more svg { width: 12px; height: 10px; }
.split { display: flex; }
.export { width: 269px; border-color: #d5dbdb; color: #aab7b8; border-right: 0; border-radius: 2px 0 0 2px; letter-spacing: .05px; }
.more { width: 42px; border-radius: 0 2px 2px 0; }
.primary { width: 208px; background: #ec7211; border-color: #ec7211; color: #fff; letter-spacing: -.05px; }
.filter-row { height: 34px; display: flex; align-items: center; padding: 0 24px 0 21px; }
.filter { width: 802px; height: 35px; border: 2px solid #00a1c9; border-radius: 2px; background: #fff; display: flex; align-items: center; padding-left: 11px; color: #545b64; }
.filter em { margin-left: 10px; color: #aab7b8; line-height: 22px; letter-spacing: .05px; padding-bottom: 1px; }
.pager { margin-left: auto; display: flex; align-items: center; }
.pager b { width: 9px; margin: 0 22px 0 23px; font-size: 14px; }
.chev { width: 11px; height: 18px; fill: none; stroke: #aab7b8; stroke-width: 2; }
.vsep { width: 1px; height: 33px; background: #e3e7e7; }
.pager .vsep { margin: 0 19px 0 17px; }
.gear { width: 18px; height: 18px; fill: none; stroke: #545b64; stroke-width: 1.900; }
.token-row { height: 61px; display: flex; align-items: center; padding: 0 0 7px 22px; }
.token { width: 279px; height: 33px; border: 1px solid #00a1c9; border-radius: 2px; background: #f1faff; display: flex; align-items: center; padding-left: 11px; line-height: 22px; }
.token b { width: 57px; letter-spacing: -.2px; }
.token span { width: 185px; letter-spacing: .3px; }
.token svg { color: #545b64; }
.token-row .vsep { margin: 0 17px 0 16px; }
.clear { width: 134px; }

.row { display: grid; grid-template-columns: 59px 198px 231px 220px 376px 220px 220px 220px 350px; height: 33px; border-bottom: 1px solid #e6eaea; background: #fff; align-items: center; line-height: 22px; letter-spacing: -.1px; }
.row:nth-child(even) { background: #fafafa; }
.row > div { padding-left: 22px; display: flex; align-items: center; }
.row > div:first-child { padding-left: 21px; }
.cb { width: 16px; height: 16px; border: 1px solid #9aa6a6; border-radius: 2px; background: #fff; }
.dash { color: #545b64; }
.row .id { color: #0073bb; letter-spacing: .27px; }
.row .trunc { letter-spacing: .2px; }
.id svg { margin-left: 5px; }
.row .num { letter-spacing: .42px; }
.row.head { height: 48px; border-top: 1px solid #e6eaea; background: #fafafa; color: #545b64; font-weight: 700; font-size: 14.500px; letter-spacing: -.08px; padding-bottom: 1px; }
.head > div + div { height: 23px; border-left: 1px solid #e3e7e7; }
.head svg { width: 11px; height: 10px; margin: 0 21px 0 auto; color: #879596; }

.scrollbar { width: 14px; margin-left: 5px; background: #f1f1f1; border-right: 1px solid #cdd2d2; display: flex; flex-direction: column; align-items: center; }
.scrollbar svg { width: 8px; height: 5px; margin: 5px 0; }
.scrollbar i { width: 11px; flex: 1; background: #c1c1c1; }
.help { flex: 1; background: #fff; padding: 13px 0 0 13px; }
.help svg { width: 18px; height: 18px; }
```
